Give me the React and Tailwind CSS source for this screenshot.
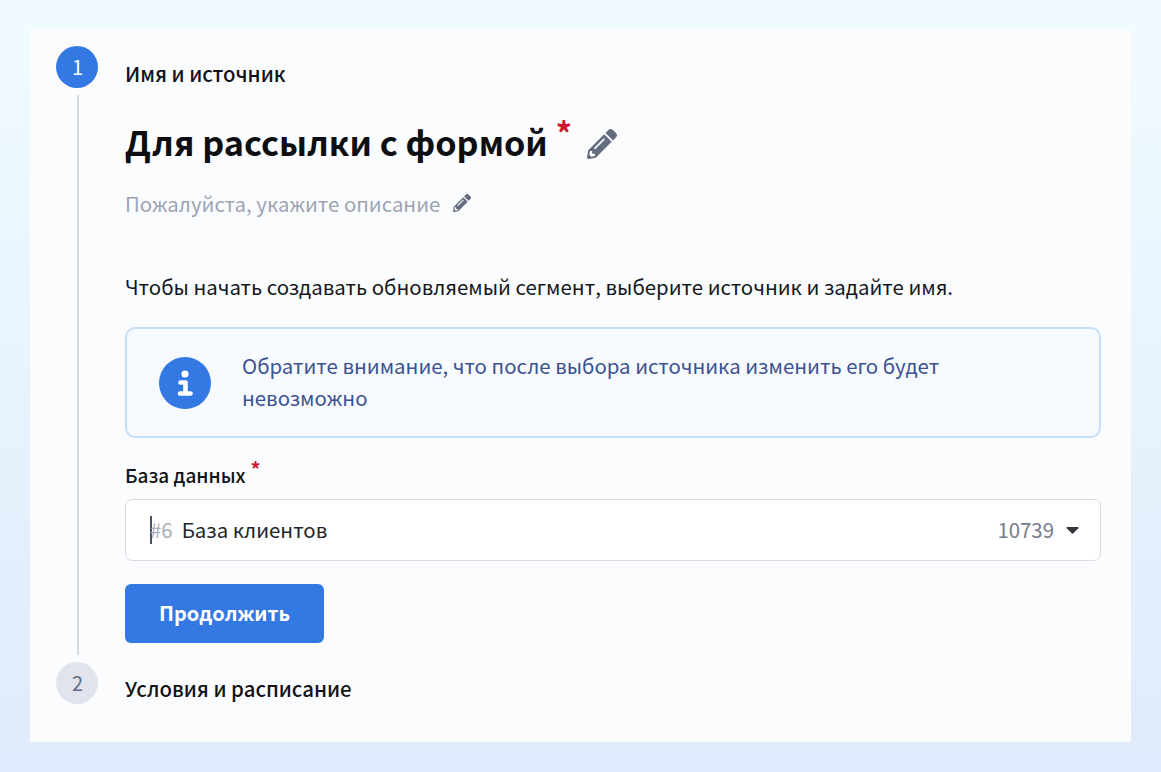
import React from 'react';
import { FaPencilAlt, FaCaretDown } from 'react-icons/fa';

const font = "font-['Noto_Sans_CJK_SC','Noto_Sans',sans-serif]";

function InfoIcon() {
  return (
    <svg viewBox="0 0 52 52" className="h-[52px] w-[52px] shrink-0">
      <circle cx="26" cy="26" r="26" fill="#3478e3" />
      <circle cx="26" cy="17" r="3.6" fill="#fff" />
      <path d="M21.5 25.5H26.5V36.5M21 36.5H31.5" fill="none" stroke="#fff" strokeWidth="4.6" strokeLinecap="round" strokeLinejoin="round" />
    </svg>
  );
}

function App() {
  return (
    <div className={`min-h-screen bg-gradient-to-b from-[#f1fbff] to-[#dfeafc] p-[30px] ${font}`}>
      <div className="h-[712px] bg-[#fbfcfe] pl-[26px] pr-[30px] pt-[16px]">
        {/* Step 1 */}
        <div className="flex">
          <div className="flex w-[42px] flex-col items-center">
            <div className="flex h-[42px] w-[42px] items-center justify-center rounded-full bg-[#3478e3] pl-[1px] text-[20px] text-white">1</div>
            <div className="ml-[2px] mt-[7px] h-[560px] w-[1.5px] bg-[#d5d8de]"></div>
          </div>
          <div className="ml-[27px] flex-1">
            <div className="mt-[12px] text-[20.4px] leading-[30px] font-medium text-[#111318]">Имя и источник</div>

            <div className="mt-[28px] flex items-start">
              <h1 className="text-[34.2px] leading-[50px] font-bold text-[#0c0e12]">Для рассылки с формой</h1>
              <span className="ml-[8px] mt-[1px] text-[32px] leading-[30px] font-bold text-[#d0152f]">*</span>
              <FaPencilAlt className="ml-[15px] mt-[13px] text-[30px] text-[#646d80]" />
            </div>

            <div className="mt-[22px] flex items-center">
              <span className="text-[20.4px] leading-[30px] text-[#9da4b4]">Пожалуйста, укажите описание</span>
              <FaPencilAlt className="ml-[13px] text-[18px] text-[#646d80]" />
            </div>

            <p className="mt-[53px] text-[20.4px] leading-[30px] text-[#15171c]">
              Чтобы начать создавать обновляемый сегмент, выберите источник и задайте имя.
            </p>

            <div className="mt-[26px] flex h-[111px] items-center rounded-[10px] border-2 border-[#c5e0fb] bg-[#f7fbff] pl-[32px] pr-[140px]">
              <InfoIcon />
              <p className="ml-[31px] -mt-[3px] text-[20.4px] leading-[32px] text-[#3c5290]">
                Обратите внимание, что после выбора источника изменить его будет невозможно
              </p>
            </div>

            <div className="mt-[21px] flex items-start">
              <span className="text-[19px] leading-[32px] font-medium text-[#111318]">База данных</span>
              <span className="ml-[5px] text-[20px] leading-[20px] font-bold text-[#d0152f]">*</span>
            </div>

            <div className="mt-[8px] flex h-[62px] items-center rounded-[7px] border border-[#d9dce4] bg-white pb-[1px] pl-[24px] pr-[17px]">
              <span className="h-[28px] w-[2px] bg-[#4a5060]"></span>
              <span className="-ml-[2px] text-[20.4px] text-[#a9aeba]">#6</span>
              <span className="ml-[9px] text-[20.4px] text-[#22252b]">База клиентов</span>
              <span className="ml-auto text-[20.4px] text-[#767d8c]">10739</span>
              <FaCaretDown className="ml-[8px] text-[21px] text-[#33363d]" />
            </div>

            <button className="mt-[23px] h-[59px] w-[199px] rounded-[6px] bg-[#3478e3] pb-[2px] text-[20px] font-bold text-white">
              Продолжить
            </button>
          </div>
        </div>

        {/* Step 2 */}
        <div className="mt-[7px] flex">
          <div className="flex h-[42px] w-[42px] items-center justify-center rounded-full bg-[#e1e4ec] pl-[1px] text-[20px] text-[#5f6b85]">2</div>
          <div className="ml-[27px] mt-[11px] text-[20.4px] leading-[30px] font-medium text-[#111318]">Условия и расписание</div>
        </div>
      </div>
    </div>
  );
}

export default App;
